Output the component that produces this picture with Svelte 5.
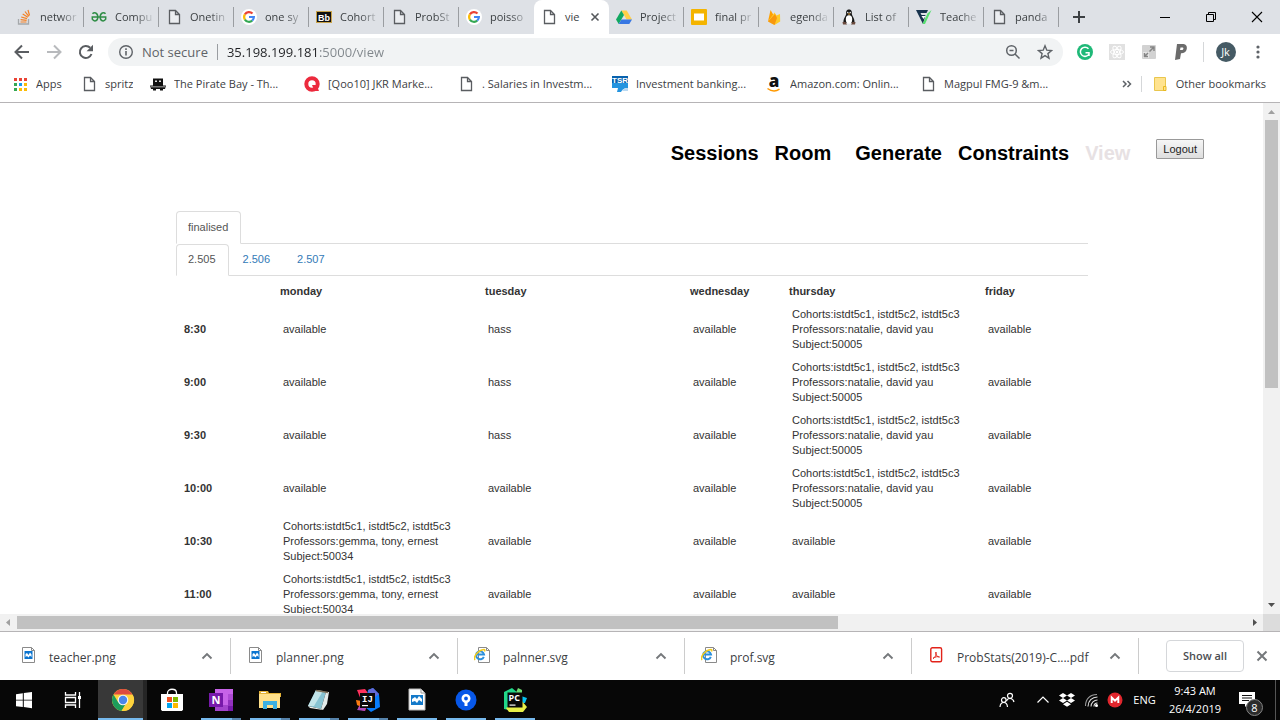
<script>
  const G = `<circle cx="8" cy="8" r="8" fill="#fff"/><g fill="none" stroke-width="2.2"><path d="M11.5 4.6A4.9 4.9 0 0 0 3.9 5.4" stroke="#ea4335"/><path d="M3.9 5.4a4.9 4.9 0 0 0 0 5.2" stroke="#fbbc05"/><path d="M3.9 10.6a4.9 4.9 0 0 0 7.3 1" stroke="#34a853"/><path d="M8 8h4.9a4.9 4.9 0 0 1-1.7 3.6" stroke="#4285f4"/></g>`;
  const DOC = `<path d="M3.5 1.5h6l4 4v9h-10zM9.500 1.500v4h4" fill="#fff" fill-opacity=".4" stroke="#5a5d61" stroke-width="1.300"/>`;
  const PICTURE = `<path d="M2.500.5h9l3 3v12h-12z" fill="#fff" stroke="#8a8a8a"/><path d="M11.500.5v3h3" fill="none" stroke="#8a8a8a"/><path d="M4.500 4h8v8h-8z" fill="#0b74cf"/><path d="M5.500 10V7l1.500-1 1.500 2L10 5.500l1.500 2V10L10 8.500l-1.500 2L7 9z" fill="#fff"/>`;
  const IE = `<path d="M4.500.5h8l3 3v12h-11z" fill="#fff" stroke="#8a8a8a"/><path d="M12.500.5v3h3" fill="none" stroke="#8a8a8a"/><path d="M9.800 9.800A4 4 0 1 1 10 7.500H3" fill="none" stroke="#2b8fdb" stroke-width="2"/><path d="M1 13C-1 10 4 3 10 2.500c1 0 1 1 .5 2" fill="none" stroke="#f3cb1d" stroke-width="1.500"/>`;
  const icons = {
    doc: DOC,
    google: G,
    stack: `<path d="M2.500 10v5h10v-5" fill="none" stroke="#a5a8ab" stroke-width="1.300"/><path d="M4.500 13h6M4.600 10.700l6 .6M5.200 8l5.800 1.700M6.700 5l5.200 3.200M9 2.500l3.800 4.800M12 1l1.500 5.500" stroke="#f48024" stroke-width="1.200"/>`,
    geeks: `<g fill="none" stroke="#2f8d46" stroke-width="1.500"><path d="M1.500 4.800C3 3 6.800 3.500 6.800 8S3 13 1.300 10.200V8h13.400v2.200C13 13 9.200 12.500 9.200 8s3.800-5 5.300-3.200"/></g>`,
    bb: `<rect x=".5" y="2.500" width="15" height="11" fill="#111" stroke="#c8a349"/><text x="8" y="11.500" text-anchor="middle" font-family="Liberation Sans" font-weight="700" font-size="9" fill="#fff">Bb</text>`,
    drive: `<path d="M5.300 1.500h5.400L16 10.500h-5.400z" fill="#ffcf48"/><path d="M5.300 1.500 8 6 2.700 15 0 10.500z" fill="#11a861"/><path d="M5.400 10.500H16L13.300 15H2.700z" fill="#3777e3"/>`,
    slides: `<rect y="0" width="16" height="16" rx="1" fill="#f4b400"/><rect x="3" y="4.500" width="10" height="7" fill="#fff"/>`,
    firebase: `<path d="M2 12.500 4.500 1l3 5z" fill="#ffa000"/><path d="M2 12.500 8.500 3.500l2 3L14 5l.2 7.500L8.500 16z" fill="#ffca28"/><path d="M2 12.500 9 5l2 4-2.500 7z" fill="#f57c00" opacity=".65"/>`,
    tux: `<path d="M8 .5C5 .5 5 3 5.200 5 4.500 7.500 2 10 2.500 14h11C14 10 11.500 7.500 10.800 5 11 3 11 .5 8 .5z" fill="#171717"/><ellipse cx="8" cy="10.500" rx="3.200" ry="4.200" fill="#fff"/><path d="M6.500 4.500h3L8 6z" fill="#e8a33d"/><circle cx="6.800" cy="3.500" r=".7" fill="#fff"/><circle cx="9.200" cy="3.500" r=".7" fill="#fff"/><path d="M1.500 13l3 0 1.500 2.500H2zM14.500 13h-3L10 15.500h4z" fill="#6b4a3d"/>`,
    teach: `<path d="M0 1h12l-1.500 3H4.500l1 2h4L7 15z" fill="#17324d"/><path d="M11.500 4.500 15.500 1 9 15H6.500z" fill="#56e06f"/><path d="M5.500 7h4l-2 3z" fill="#fff"/>`,
    apps: `<path fill="#ea4335" d="M2 2h3v3H2zM7 2h3v3H7zM12 2h3v3h-3z"/><path fill="#34a853" d="M2 7h3v3H2zM2 12h3v3H2z"/><path fill="#1a9bf0" d="M7 7h3v3H7z"/><path fill="#fbbc05" d="M12 7h3v3h-3zM7 12h3v3H7zM12 12h3v3h-3z"/>`,
    pirate: `<path d="M3 2.500h10v7H3zM0 9.500h16l-1 3.500h-2v1.500h-3V13H6v1.500H3V13H1z" fill="#111"/><path d="M5 4.500h2V6H5zM9 4.500h2V6H9zM1 10.500h14v.8H1z" fill="#ddd"/>`,
    qoo: `<circle cx="8" cy="8" r="5.700" fill="none" stroke="#ec2a3d" stroke-width="4"/><path d="M8 9h4.500l2.500 6h-4.500z" fill="#ec2a3d"/>`,
    tsr: `<path d="M0 0h16v12H0z" fill="#0862ae"/><path d="M0 7h16v5c-4 0-5 1-7 4H5l1-4H0z" fill="#2494df"/><path d="M10 15c1-2 3-3 6-3v3z" fill="#b9d9f2"/><text x="8" y="7" text-anchor="middle" font-family="Liberation Sans" font-weight="700" font-size="8" fill="#fff">TSR</text>`,
    amazon: `<text x="8" y="11" text-anchor="middle" font-family="Open Sans" font-weight="800" font-size="17" fill="#111">a</text><path d="M1.500 12.500c4 3 8.500 3 12 .7" fill="none" stroke="#f90" stroke-width="1.500"/>`,
    folder: `<path d="M2.500 1.500h11v13h-11z" fill="#ffe38f" stroke="#e9c64e"/><path d="M11.500 10.500h2.500v4h-2.500z" fill="#ffe38f" stroke="#e9b91f"/>`,
    back: `<path d="M15 8H2M8 1.500 1.500 8 8 14.500" fill="none" stroke="#5a5d61" stroke-width="2"/>`,
    forward: `<path d="M1 8h13M8 1.500 14.500 8 8 14.500" fill="none" stroke="#b8babd" stroke-width="2"/>`,
    reload: `<path d="M13.500 10A6 6 0 1 1 12.200 3.800" fill="none" stroke="#5a5d61" stroke-width="2"/><path d="M15 .8v6.400H8.600z" fill="#5a5d61"/>`,
    info: `<circle cx="8" cy="8" r="6.300" fill="none" stroke="#5f6368" stroke-width="1.400"/><path d="M8 7v4.500M8 4.300V6" stroke="#5f6368" stroke-width="1.600"/>`,
    zoom: `<circle cx="6.500" cy="6.500" r="4.800" fill="none" stroke="#5f6368" stroke-width="1.500"/><path d="M10 10l4.500 4.500M4.500 6.500h4" stroke="#5f6368" stroke-width="1.500"/>`,
    star: `<path d="M8 1.800l1.800 4.400 4.700.4-3.600 3 1.100 4.600L8 11.700l-4 2.500 1.100-4.600-3.600-3 4.700-.4z" fill="none" stroke="#5f6368" stroke-width="1.400"/>`,
    grammarly: `<circle cx="8" cy="8" r="8" fill="#1fb978"/><path d="M11.500 4.800A4.600 4.600 0 1 0 12 10M8.500 8.700H12V12" fill="none" stroke="#fff" stroke-width="1.500"/>`,
    react: `<path d="M0 0h16v16H0z" fill="#e1e1e1"/><g fill="none" stroke="#fff"><ellipse cx="8" cy="8" rx="6.500" ry="2.500"/><ellipse cx="8" cy="8" rx="6.500" ry="2.500" transform="rotate(60 8 8)"/><ellipse cx="8" cy="8" rx="6.500" ry="2.500" transform="rotate(120 8 8)"/></g><circle cx="8" cy="8" r="1.200" fill="#fff"/>`,
    expand: `<rect x="1" y="1" width="14" height="14" rx="1" fill="#d2d2d2"/><path d="M2 8h6v6H2z" fill="#e6e6e6"/><path d="M9 3h4v4M13 3 8.500 7.500M7 9 3.500 12.500M3.500 9v3.500H7" fill="none" stroke="#858585" stroke-width="1.500"/>`,
    paypal: `<path d="M4 0h6.500c5 0 4.500 9-1.500 9.300H8L7 15 2 16z" fill="#6b6b6b"/><path d="M7.500 3.500h2c1.500 0 1 2.500-.5 2.500H7z" fill="#fff"/>`,
    dots: `<g fill="#5f6368"><circle cx="8" cy="3" r="1.600"/><circle cx="8" cy="8" r="1.600"/><circle cx="8" cy="13" r="1.600"/></g>`,
    close: `<path d="M4.500 4.500l7 7M11.500 4.500l-7 7" stroke="#55585c" stroke-width="1.600"/>`,
    plus: `<path d="M8 2v12M2 8h12" stroke="#3c4043" stroke-width="2"/>`,
    minimize: `<path d="M3 8.500h10" stroke="#000"/>`,
    restore: `<path d="M3.500 5.500h7v7h-7zM5.500 5V3.500h7v7H11" fill="none" stroke="#000"/>`,
    exit: `<path d="M3 3l10 10M13 3 3 13" stroke="#000" stroke-width="1.100"/>`,
    up: `<path d="M3.500 10.500 8 6l4.500 4.500" fill="none" stroke="#75787b" stroke-width="1.900"/>`,
    cross: `<path d="M3.500 3.500l9 9M12.500 3.500l-9 9" stroke="#75787b" stroke-width="2"/>`,
    more: `<path d="M4 5l3 3-3 3M8.500 5l3 3-3 3" fill="none" stroke="#5f6368" stroke-width="1.500"/>`,
    picture: PICTURE,
    ie: IE,
    pdf: `<rect x="2.800" y=".8" width="10.800" height="14" rx="1.500" fill="#fff" stroke="#e2231a" stroke-width="1.400"/><path d="M5 11.500c3-2 3.500-4.500 3-6.500-1 1 .5 5 3.500 5-1.500-.8-4.500-.3-6.500 1.500z" fill="none" stroke="#e2231a" stroke-width="1"/>`,
    windows: `<path d="M4 6.200 10.800 5.200v6.500H4zM11.800 5 20 4v7.700h-8.200zM4 12.600h6.800v6.500L4 18.200zM11.800 12.600H20v7.700l-8.200-1.200z" fill="#fff"/>`,
    taskview: `<path d="M4.500 4v3h10V4M4.500 20v-3h10v3M4.500 9.500h10v5h-10zM18.500 4v16" fill="none" stroke="#fff" stroke-width="1.300"/><path d="M17 8h3v3h-3z" fill="#fff"/>`,
    chrome: `<circle cx="12" cy="12" r="11" fill="#fdd23c"/><path d="M2.500 6.500A11 11 0 0 1 21.500 6.500H12z" fill="#dd4b3e"/><path d="M2.500 6.500A11 11 0 0 0 10.500 22.900L15 16 7 14z" fill="#1c9c5b"/><path d="M21.800 7H12l4.500 6-6 9.900A11 11 0 0 0 21.800 7z" fill="#fdd23c"/><circle cx="12" cy="12" r="5.300" fill="#f5f5f5"/><circle cx="12" cy="12" r="4.200" fill="#4a86ea"/>`,
    store: `<path d="M1 6h22v15.500l-1 1.500H2l-1-1.500z" fill="#fff"/><path d="M7.500 8V5c0-5 9-5 9 0v3" fill="none" stroke="#fff" stroke-width="1.300"/><path d="M7 9h5v5H7z" fill="#f25022"/><path d="M13 9h5v5h-5z" fill="#7fba00"/><path d="M7 15h5v5H7z" fill="#00a4ef"/><path d="M13 15h5v5h-5z" fill="#ffb900"/>`,
    onenote: `<path d="M6 1h18v22H6z" fill="#c763e8"/><path d="M19 6h5v6h-5z" fill="#ae4bd5"/><path d="M19 12h5v6h-5z" fill="#9332bf"/><path d="M6 17h13v6H6z" fill="#a344cc"/><path d="M19 18h5v5h-5z" fill="#7719aa"/><path d="M0 5h14v14H0z" fill="#7719aa"/><text x="7" y="16" text-anchor="middle" font-family="Open Sans" font-weight="700" font-size="11" fill="#fff">N</text>`,
    explorer: `<path d="M1 3h9l1 2h12v4H1z" fill="#e4b237"/><path d="M1 6h21v14H1z" fill="#ffe08a"/><path d="M3 4h5v1H3z" fill="#fff"/><path d="M5 21v-8h14v8h-4v-4H9v4z" fill="#3bb0e3"/><path d="M9 17h6v3H9z" fill="#ffe08a"/>`,
    notepad: `<path d="M9 2l10 2-5 17-13-3z" fill="#87c3d2"/><path d="M9 2l7 1-9 15-6 0z" fill="#c2e4e9"/><path d="M19 4l3 0-2 12-4 6-2-1z" fill="#e3ebea"/><path d="M1 18l13 3 2 1-13-2z" fill="#f2f2ee"/><path d="M9 2.500l12 2" stroke="#80715a" stroke-width="1.500"/>`,
    idea: `<path d="M1 2l8-1 6 8-6 14-7-2 3-9z" fill="#fe315d"/><path d="M0 12l6 1-1 6-4-2z" fill="#f97a12"/><path d="M4 17h6l-1 6-8-1z" fill="#a94bbd"/><path d="M12 2l5-2 6 6 1 13-9 5-6-5z" fill="#087cfa"/><path d="M12 2l5-2 6 6-8 6z" fill="#6469d6"/><path d="M4 5h15v15H4z" fill="#090909"/><text x="6" y="14" font-family="Liberation Mono" font-weight="700" font-size="9" fill="#fff">IJ</text><path d="M6 17h6v1.200H6z" fill="#fff"/>`,
    photo: `<path d="M4 1h12l4 4v17H4z" fill="#fff" stroke="#bbb"/><path d="M16 1v4h4" fill="none" stroke="#999"/><path d="M6 7h12v10H6z" fill="#1479c9"/><path d="M7 14v-3l3-2 2 2 2-3 3 3v3l-3-2-2 3-2-2z" fill="#fff"/>`,
    sourcetree: `<circle cx="12" cy="12" r="10.500" fill="#0757e8"/><circle cx="12" cy="10.500" r="3.200" fill="none" stroke="#fff" stroke-width="2.600"/><path d="M10.500 13h3v5h-3z" fill="#fff"/>`,
    pycharm: `<path d="M1 4l8-4 6 5-5 18-9-2z" fill="#21d789"/><path d="M15 0l4 2v5h-7z" fill="#6ede75"/><path d="M18 8l6 2-2 5h-4z" fill="#07c3f2"/><path d="M3 20l15-8 6 7-4 5H6z" fill="#e9ef48"/><path d="M4.500 4.500h15v15h-15z" fill="#090909"/><text x="5.500" y="13" font-family="Open Sans" font-weight="700" font-size="9" fill="#fff">PC</text><path d="M6.500 16.500h6v1.200h-6z" fill="#fff"/>`,
    people: `<g fill="none" stroke="#fff" stroke-width="1.200"><circle cx="11" cy="3.800" r="2.500"/><path d="M7.500 9c1-3.500 6.500-3.500 7.500 1"/><circle cx="4.800" cy="8" r="2.300"/><path d="M1 15c.5-6 7-6 7.500 0"/></g>`,
    trayup: `<path d="M2.500 10.500 8 5l5.500 5.500" fill="none" stroke="#fff" stroke-width="1.200"/>`,
    dropbox: `<path d="M4 1l4 2.500L4 6 0 3.500zM12 1l4 2.500L12 6 8 3.500zM4 6l4 2.500L4 11 0 8.500zM12 6l4 2.500-4 2.500-4-2.500zM8 9.800l4 2.500-4 2.500-4-2.500z" fill="#fff"/>`,
    wifi: `<g fill="none" stroke="#ddd" stroke-width="1.100"><path d="M5 14.500C5 9 9 5 14.500 5M8 14.500c0-3.500 3-6.500 6.500-6.500M11 14.500c0-2 1.500-3.500 3.500-3.500"/><path d="M2.500 14C2.500 7 7 2.500 14 2.500" opacity=".7"/></g><circle cx="13.500" cy="13.500" r="1.500" fill="#fff"/>`,
    mega: `<circle cx="8" cy="8" r="7.500" fill="#e1262d"/><path d="M4.700 11V5.500L8 8.700l3.300-3.200V11" fill="none" stroke="#fff" stroke-width="1.900"/>`,
    note: `<path d="M0 0h16v12H9l-3 3v-3H0z" fill="#fff"/><path d="M3 3.500h10M3 6h10M3 8.500h7" stroke="#111" stroke-width="1.200"/>`,
  };

  const tabs = [
    ['stack', 'networ'], ['geeks', 'Compu'], ['doc', 'Onetin'], ['google', 'one sy'],
    ['bb', 'Cohort'], ['doc', 'ProbSt'], ['google', 'poisso'], ['doc', 'vie', true],
    ['drive', 'Project'], ['slides', 'final pr'], ['firebase', 'egenda'], ['tux', 'List of'],
    ['teach', 'Teache'], ['doc', 'panda'],
  ];
  const bookmarks = [
    ['doc', 'spritz', true], ['pirate', 'The Pirate Bay - Th...'], ['qoo', '[Qoo10] JKR Marke...'],
    ['doc', '. Salaries in Investm...'], ['tsr', 'Investment banking...'],
    ['amazon', 'Amazon.com: Onlin...'], ['doc', 'Magpul FMG-9 &m...'],
  ];
  const nav = ['Sessions', 'Room', 'Generate', 'Constraints', 'View'];
  const days = ['monday', 'tuesday', 'wednesday', 'thursday', 'friday'];
  const A = ['available'];
  const H = ['hass'];
  const cohorts = 'Cohorts:istdt5c1, istdt5c2, istdt5c3';
  const N = [cohorts, 'Professors:natalie, david yau', 'Subject:50005'];
  const E = [cohorts, 'Professors:gemma, tony, ernest', 'Subject:50034'];
  const rows = [
    ['8:30', A, H, A, N, A], ['9:00', A, H, A, N, A], ['9:30', A, H, A, N, A],
    ['10:00', A, A, A, N, A], ['10:30', E, A, A, A, A], ['11:00', E, A, A, A, A],
  ];
  const downloads = [
    ['picture', 'teacher.png'], ['picture', 'planner.png'], ['ie', 'palnner.svg'],
    ['ie', 'prof.svg'], ['pdf', 'ProbStats(2019)-C....pdf'],
  ];
  const programs = [
    ['chrome', 'active'], ['store', ''], ['onenote', 'open multi'], ['explorer', 'open multi'],
    ['notepad', 'open multi'], ['idea', 'open multi'], ['photo', 'open'], ['sourcetree', 'open'], ['pycharm', 'open'],
  ];
</script>

{#snippet icon(name, big = false)}
  <svg class="icon" class:big viewBox={big ? '0 0 24 24' : '0 0 16 16'} aria-hidden="true">{@html icons[name]}</svg>
{/snippet}

<div class="screen">
  <header>
    <div class="tabstrip">
      {#each tabs as [i, label, active]}
        <div class="tab" class:active>
          {@render icon(i)}
          <span class="title">{label}</span>
          {#if active}<button class="bare" aria-label="Close tab">{@render icon('close')}</button>{/if}
        </div>
      {/each}
      <button class="bare newtab" aria-label="New tab">{@render icon('plus')}</button>
      <div class="controls">
        <button class="bare" aria-label="Minimize">{@render icon('minimize')}</button>
        <button class="bare" aria-label="Restore">{@render icon('restore')}</button>
        <button class="bare" aria-label="Close">{@render icon('exit')}</button>
      </div>
    </div>
    <div class="toolbar">
      <button class="bare tool" aria-label="Back">{@render icon('back')}</button>
      <button class="bare tool" aria-label="Forward">{@render icon('forward')}</button>
      <button class="bare tool" aria-label="Reload">{@render icon('reload')}</button>
      <div class="omnibox">
        {@render icon('info')}
        <label for="url">Not secure</label>
        <input id="url" value="35.198.199.181:5000/view" spellcheck="false" />
        <button class="bare tool" aria-label="Zoom">{@render icon('zoom')}</button>
        <button class="bare tool" aria-label="Bookmark">{@render icon('star')}</button>
      </div>
      {#each ['grammarly', 'react', 'expand', 'paypal'] as e}
        <button class="bare tool" aria-label={e}>{@render icon(e)}</button>
      {/each}
      <button class="bare profile" aria-label="Profile"><span class="avatar">Jk</span></button>
      <button class="bare tool" aria-label="Menu">{@render icon('dots')}</button>
    </div>
    <nav class="bookmarks" aria-label="Bookmarks">
      <a class="mark short" href="#apps">{@render icon('apps')}<span>Apps</span></a>
      {#each bookmarks as [i, label, short]}
        <a class="mark" class:short href="#bookmark">{@render icon(i)}<span>{label}</span></a>
      {/each}
      <div class="others">
        <button class="bare" aria-label="More bookmarks">{@render icon('more')}</button>
        <a href="#other">{@render icon('folder')}<span>Other bookmarks</span></a>
      </div>
    </nav>
  </header>

  <div class="viewport">
    <main>
      <nav class="sitenav" aria-label="Site">
        {#each nav as item}
          <a href="#{item}" class:current={item === 'View'} class:wide={item === 'Room'}>{item}</a>
        {/each}
        <button class="logout">Logout</button>
      </nav>
      <section>
        <ul class="tabsnav outer"><li><a class="selected" href="#finalised">finalised</a></li></ul>
        <ul class="tabsnav">
          <li><a class="selected" href="#2.505">2.505</a></li>
          <li><a href="#2.506">2.506</a></li>
          <li><a href="#2.507">2.507</a></li>
        </ul>
        <table>
          <colgroup><col class="time" /><col class="broad" /><col class="broad" /><col class="narrow" /><col class="medium" /><col /></colgroup>
          <thead><tr><td></td>{#each days as d}<th scope="col">{d}</th>{/each}</tr></thead>
          <tbody>
            {#each rows as [time, ...cells]}
              <tr>
                <th scope="row">{time}</th>
                {#each cells as lines}
                  <td>{#each lines as line}<div>{line}</div>{/each}</td>
                {/each}
              </tr>
            {/each}
          </tbody>
        </table>
      </section>
    </main>
    <div class="bar vertical">
      <svg viewBox="0 0 17 17"><path d="M5 11h7L8.500 7z" fill="#a0a0a0" /></svg>
      <div class="thumb"></div>
      <svg class="end" viewBox="0 0 17 17"><path d="M5 6h7l-3.500 4z" fill="#505050" /></svg>
    </div>
    <div class="bar horizontal">
      <svg viewBox="0 0 17 17"><path d="M10 5v7L6 8.500z" fill="#a0a0a0" /></svg>
      <div class="thumb"></div>
      <svg class="end" viewBox="0 0 17 17"><path d="M7 5v7l4-3.500z" fill="#505050" /></svg>
    </div>
    <div class="corner"></div>
  </div>

  <div class="downloads">
    {#each downloads as [i, label]}
      <div class="download">
        {@render icon(i)}
        <span>{label}</span>
        <button class="bare" aria-label="Options for {label}">{@render icon('up')}</button>
      </div>
    {/each}
    <div class="finish">
      <button class="showall">Show all</button>
      <button class="bare" aria-label="Close downloads">{@render icon('cross')}</button>
    </div>
  </div>

  <footer>
    <button class="bare start" aria-label="Start">{@render icon('windows', true)}</button>
    <button class="bare taskview" aria-label="Task view">{@render icon('taskview', true)}</button>
    {#each programs as [name, state]}
      <button class="bare program {state}" aria-label={name}>{@render icon(name, true)}</button>
    {/each}
    <div class="tray">
      <button class="bare people" aria-label="People">{@render icon('people')}</button>
      {#each ['trayup', 'dropbox', 'wifi', 'mega'] as t}
        <button class="bare" aria-label={t}>{@render icon(t)}</button>
      {/each}
      <span class="lang">ENG</span>
      <div class="clock"><span>9:43 AM</span><span>26/4/2019</span></div>
      <button class="bare notes" aria-label="Notifications">{@render icon('note')}<span class="badge">8</span></button>
      <div class="desktop"></div>
    </div>
  </footer>
</div>

<style>
  :global(body) { margin: 0; overflow: hidden; }
  * { box-sizing: border-box; }
  .screen { display: flex; flex-direction: column; height: 100vh; background: #fff; color: #3c4043; font: 11px/16px 'Open Sans', 'Noto Sans', sans-serif; }
  a { color: inherit; text-decoration: none; }
  .bare { border: 0; padding: 0; background: none; color: inherit; font: inherit; display: flex; align-items: center; justify-content: center; }
  .icon { width: 16px; height: 16px; flex: none; display: block; }
  .icon.big { width: 24px; height: 24px; }

  header { border-bottom: 1px solid #b6b4b6; }
  .tabstrip { display: flex; align-items: center; height: 34px; padding-left: 9px; background: #dee1e6; }
  .tab { display: flex; align-items: center; flex: 0 1 75px; min-width: 0; height: 20px; padding: 0 3px 0 7px; gap: 8px; border-right: 1px solid #9a9da1; }
  .title { flex: 1; overflow: hidden; white-space: nowrap; mask-image: linear-gradient(90deg, #000 calc(100% - 20px), transparent); }
  .tab.active { height: 34px; padding-right: 7px; background: #fff; border: 0; border-radius: 8px 8px 0 0; }
  .tab:has(+ .active) { border-color: transparent; }
  .tab.active .title { mask-image: none; overflow: visible; }
  .newtab { width: 40px; height: 34px; }
  .controls { display: flex; height: 28px; margin-left: auto; }
  .controls button { width: 46px; }
  .toolbar { display: flex; align-items: center; height: 36px; padding: 0 6px; }
  .tool { width: 32px; height: 28px; }
  .omnibox { display: flex; align-items: center; flex: 1; height: 28px; margin: 0 6px; padding-left: 10px; gap: 8px; border-radius: 14px; background: #f1f3f4; font-size: 13px; color: #5f6368; }
  .omnibox .tool:last-child { margin-left: -8px; margin-right: 2px; }
  label { padding-right: 9px; border-right: 1px solid #9a9da1; }
  input { flex: 1; min-width: 0; border: 0; padding: 0 0 0 1px; outline: 0; font: inherit; color: transparent; background: linear-gradient(90deg, #202124 93px, #80868b 93px); background-clip: text; -webkit-background-clip: text; }
  .profile { width: 39px; height: 20px; margin-left: 6px; padding-left: 5px; border-left: 1px solid #d5d7d9; }
  .avatar { width: 20px; height: 20px; border-radius: 50%; background: #455a64; color: #fff; font-size: 11px; line-height: 20px; text-align: center; }
  .bookmarks { display: flex; align-items: center; height: 32px; padding: 0 14px 4px 12px; white-space: nowrap; }
  .mark, .others a { display: flex; align-items: center; gap: 8px; }
  .mark { flex: 0 1 154px; min-width: 0; overflow: hidden; }
  .mark.short { flex-basis: 69px; }
  .mark span { overflow: hidden; }
  .others { display: flex; align-items: center; margin-left: auto; gap: 6px; }
  .others a { padding-left: 10px; border-left: 1px solid #d5d7d9; }

  .viewport { flex: 1; min-height: 0; display: grid; grid-template: minmax(0, 1fr) 17px / minmax(0, 1fr) 17px; }
  main { overflow: hidden; color: #333; font: 11px/15px 'Liberation Sans', Arial, sans-serif; }
  .sitenav { display: flex; justify-content: flex-end; align-items: flex-start; height: 108px; padding: 36px 59px 0 0; gap: 16px; font-size: 20px; line-height: 28px; font-weight: 700; color: #000; }
  .sitenav .wide { padding-right: 8px; }
  .sitenav .current { color: #e7e1e3; }
  .logout { height: 20px; padding: 0 6px; margin-left: 10px; border: 1px solid #999; border-radius: 1px; background: linear-gradient(#f6f6f6, #dedede); color: #222; font: 11px/16px 'Liberation Sans', Arial, sans-serif; }
  section { padding: 0 175px 0 176px; }
  .tabsnav { display: flex; gap: 2px; margin: 0; padding: 0; list-style: none; border-bottom: 1px solid #ddd; }
  .tabsnav li { margin-bottom: -1px; }
  .tabsnav a { display: block; padding: 7px 12px 8px 11px; border: 1px solid transparent; border-radius: 4px 4px 0 0; color: #337ab7; }
  .tabsnav.outer a { padding-top: 8px; }
  .tabsnav .selected { color: #555; background: #fff; border-color: #ddd; border-bottom-color: #fff; }
  table { width: 100%; table-layout: fixed; border-collapse: collapse; }
  .time { width: 104px; }
  .broad { width: 205px; }
  .narrow { width: 99px; }
  .medium { width: 196px; }
  th { text-align: left; padding: 0; }
  thead th { padding: 8px 0 4px; }
  tbody th { padding: 4px 8px; }
  td { padding: 4px 0 4px 3px; white-space: nowrap; }

  .bar { display: flex; align-items: center; background: #f1f1f1; }
  .bar svg { width: 17px; height: 17px; flex: none; }
  .vertical { flex-direction: column; }
  .vertical .thumb { width: 13px; flex: 0 1 52.5%; }
  .horizontal .thumb { height: 13px; flex: 0 1 65%; }
  .thumb { background: #c1c1c1; }
  .vertical .end { margin-top: auto; }
  .horizontal .end { margin-left: auto; }
  .corner { background: #dcdcdc; }

  .downloads { display: flex; align-items: center; height: 49px; padding-left: 4px; border-top: 1px solid #b6b4b6; font-size: 12px; }
  .download { display: flex; align-items: center; flex: 0 1 227px; min-width: 0; height: 36px; padding: 0 15px 0 16px; border-right: 1px solid #ccc; white-space: nowrap; }
  .download > .icon { margin: 0 13px 2px 0; }
  .download span { padding-top: 4px; }
  .download button { margin-left: auto; }
  .finish { display: flex; align-items: center; gap: 10px; margin-left: auto; padding-right: 10px; }
  .showall { height: 32px; padding: 0 16px; border: 1px solid #d5d7da; border-radius: 4px; background: #fff; color: #4a4d51; font: 600 11px/16px 'Open Sans', sans-serif; }

  footer { display: flex; height: 40px; background: #070707; color: #fff; }
  .start { width: 48px; }
  .taskview { width: 50px; }
  .program { width: 49px; background: linear-gradient(#76b9ed, #76b9ed) center bottom / 0 2px no-repeat; }
  .program.open { background-size: 40px 2px; }
  .program.multi { background-image: linear-gradient(90deg, #76b9ed 31px, #5683ab 31px); }
  .program.active { background-color: #383838; background-size: 100% 2px; border-right: 4px solid #252525; padding-left: 4px; }
  .tray { display: flex; align-items: center; margin-left: auto; }
  .tray > button { width: 24px; height: 40px; }
  .tray > .people { width: 48px; }
  .lang { width: 35px; text-align: center; }
  .clock { display: flex; flex-direction: column; width: 66px; text-align: center; line-height: 18px; }
  .tray > .notes { width: 47px; position: relative; justify-content: flex-start; padding-left: 11px; }
  .badge { position: absolute; left: 18px; top: 19px; width: 17px; height: 17px; border: 1px solid #858585; border-radius: 50%; background: #2b2b2b; line-height: 15px; text-align: center; }
  .desktop { width: 5px; height: 40px; border-left: 1px solid #555; }
</style>
